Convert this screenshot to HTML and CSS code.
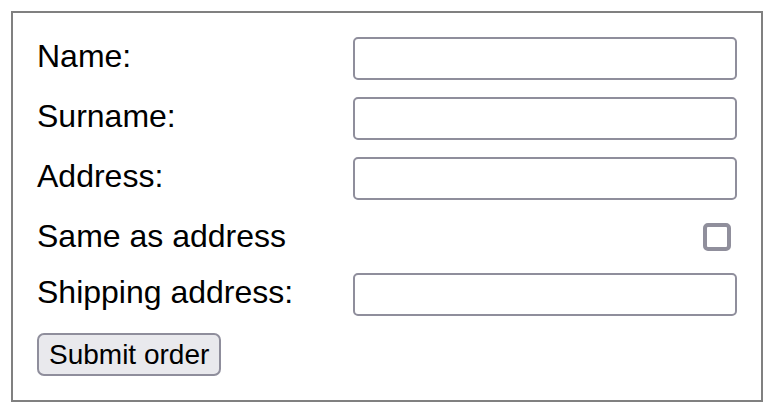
FILE: index.html
```html
<!DOCTYPE html>
<html lang="en">
<head>
<meta charset="utf-8">
<title>Order form</title>
<link rel="stylesheet" href="styles.css">
</head>
<body>
<form class="order-form">
  <label class="field-label" for="name">Name:</label>
  <input class="text-input" type="text" id="name">
  <label class="field-label" for="surname">Surname:</label>
  <input class="text-input" type="text" id="surname">
  <label class="field-label" for="address">Address:</label>
  <input class="text-input" type="text" id="address">
  <label class="field-label" for="same">Same as address</label>
  <input class="check-input" type="checkbox" id="same">
  <label class="field-label" for="shipping">Shipping address:</label>
  <input class="text-input" type="text" id="shipping">
  <button class="submit-btn" type="button">Submit order</button>
</form>
</body>
</html>
```

FILE: styles.css
```css
html, body {
  margin: 0;
  padding: 0;
  background: #ffffff;
}

body {
  font-family: "Liberation Sans", Arial, sans-serif;
  color: #000000;
}

.order-form {
  box-sizing: border-box;
  width: 752px;
  margin: 11px;
  border: 2px solid #808080;
  padding: 24px;
  display: grid;
  grid-template-columns: 1fr 384px;
  row-gap: 17px;
  align-items: center;
}

.field-label {
  align-self: start;
  font-size: 32px;
  line-height: 39px;
  white-space: nowrap;
}

.text-input {
  box-sizing: border-box;
  width: 384px;
  height: 43px;
  margin: 0;
  border: 2px solid #8f8e9c;
  border-radius: 5px;
  background: #ffffff;
  padding: 0 8px;
  font: inherit;
  font-size: 26px;
  outline: none;
}

.check-input {
  appearance: none;
  -webkit-appearance: none;
  box-sizing: border-box;
  width: 28px;
  height: 28px;
  margin: 6px 6px 5px 6px;
  justify-self: end;
  border: 4px solid #908f9c;
  border-radius: 5px;
  background: #ffffff;
}

.submit-btn {
  grid-column: 1;
  justify-self: start;
  box-sizing: border-box;
  height: 43px;
  margin: 0;
  padding: 0 10px;
  border: 2px solid #8f8e9c;
  border-radius: 7px;
  background: #e9e9ed;
  color: #000000;
  font-family: "Liberation Sans", Arial, sans-serif;
  font-size: 28px;
  line-height: 1;
}
```
